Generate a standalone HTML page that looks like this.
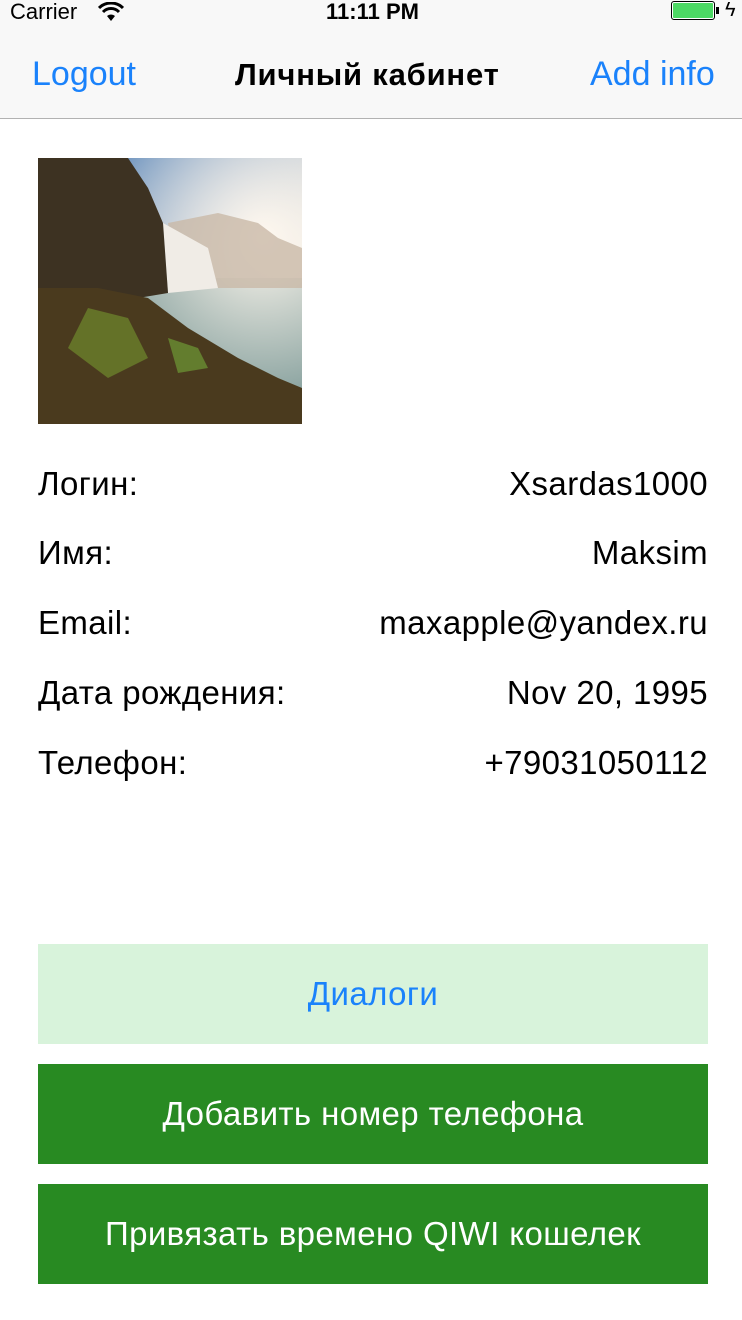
<!DOCTYPE html>
<html><head><meta charset="utf-8"><style>
body{margin:0;width:742px;height:1320px;background:#fff;position:relative;overflow:hidden;font-family:"Liberation Sans",sans-serif}
.a{position:absolute;white-space:nowrap}
.row{position:absolute;left:38px;width:670px;font-size:33px;letter-spacing:.4px;color:#000;height:40px}
.row span:last-child{position:absolute;right:0}
.btn{position:absolute;left:38px;width:670px;height:100px;text-align:center;line-height:100px;font-size:33px;letter-spacing:.4px}
</style></head><body>
<div class="a" style="left:0;top:0;width:742px;height:118px;background:#f8f8f8;border-bottom:1px solid #b2b2b2"></div>
<div class="a" style="left:10px;top:0;font-size:22px;line-height:24px">Carrier</div>
<svg class="a" style="left:98px;top:2px" width="26" height="20" viewBox="0 0 26 20"><path d="M13 19 L9 14 A6 6 0 0 1 17 14Z" fill="#000"/><path d="M5 10 A11 11 0 0 1 21 10" stroke="#000" stroke-width="3" fill="none"/><path d="M1 6 A17 17 0 0 1 25 6" stroke="#000" stroke-width="3" fill="none"/></svg>
<div class="a" style="left:326px;top:0;font-size:22px;line-height:24px;font-weight:bold">11:11 PM</div>
<div class="a" style="left:671px;top:1px;width:42px;height:17px;border:1px solid #000;border-radius:3px;background:#4cd964;box-shadow:inset 0 0 0 1px #fff"></div>
<div class="a" style="left:716px;top:7px;width:3px;height:7px;background:#000"></div>
<div class="a" style="left:725px;top:-1px;font-size:20px">ϟ</div>
<div class="a" style="left:32px;top:55px;font-size:34px;color:#1a82fb">Logout</div>
<div class="a" style="left:235px;top:57px;font-size:31px;font-weight:bold;letter-spacing:.8px">Личный кабинет</div>
<div class="a" style="left:590px;top:55px;font-size:34px;color:#1a82fb">Add info</div>
<svg class="a" style="left:38px;top:158px" width="264" height="266" viewBox="0 0 264 266">
<defs><linearGradient id="s" x1="0" y1="0" x2="1" y2="1"><stop offset="0" stop-color="#4e7fb8"/><stop offset=".7" stop-color="#e8e4dc"/><stop offset="1" stop-color="#f6efe6"/></linearGradient>
<radialGradient id="m" cx=".85" cy=".3" r=".6"><stop offset="0" stop-color="#fff8ef"/><stop offset="1" stop-color="#fff8ef" stop-opacity="0"/></radialGradient></defs>
<rect width="264" height="266" fill="url(#s)"/>
<rect y="120" width="264" height="146" fill="#8aa3a0"/>
<rect width="264" height="266" fill="url(#m)"/>
<path d="M130 65 L180 55 L220 65 L240 80 L264 90 L264 130 L140 130Z" fill="#c9b9a8" opacity=".8"/>
<path d="M125 65 L170 90 L180 130 L130 135Z" fill="#f0ece6"/>
<path d="M0 0 L90 0 L110 30 L125 65 L130 135 L100 140 L60 135 L0 130Z" fill="#3d3222"/>
<path d="M0 130 L60 130 L110 140 L150 170 L200 200 L240 220 L264 230 L264 266 L0 266Z" fill="#4a3a1e"/>
<path d="M50 150 L90 160 L110 200 L70 220 L30 190Z" fill="#6f8a2c" opacity=".7"/>
<path d="M130 180 L160 190 L170 210 L140 215Z" fill="#6e9a34" opacity=".7"/>
</svg>
<div class="row" style="top:465px"><span>Логин:</span><span>Xsardas1000</span></div>
<div class="row" style="top:534px"><span>Имя:</span><span>Maksim</span></div>
<div class="row" style="top:604px"><span>Email:</span><span>maxapple@yandex.ru</span></div>
<div class="row" style="top:674px"><span>Дата рождения:</span><span>Nov 20, 1995</span></div>
<div class="row" style="top:744px"><span>Телефон:</span><span>+79031050112</span></div>
<div class="btn" style="top:944px;background:#d8f3db;color:#1a82fb">Диалоги</div>
<div class="btn" style="top:1064px;background:#288a22;color:#fff">Добавить номер телефона</div>
<div class="btn" style="top:1184px;background:#288a22;color:#fff">Привязать времено QIWI кошелек</div>
</body></html>
